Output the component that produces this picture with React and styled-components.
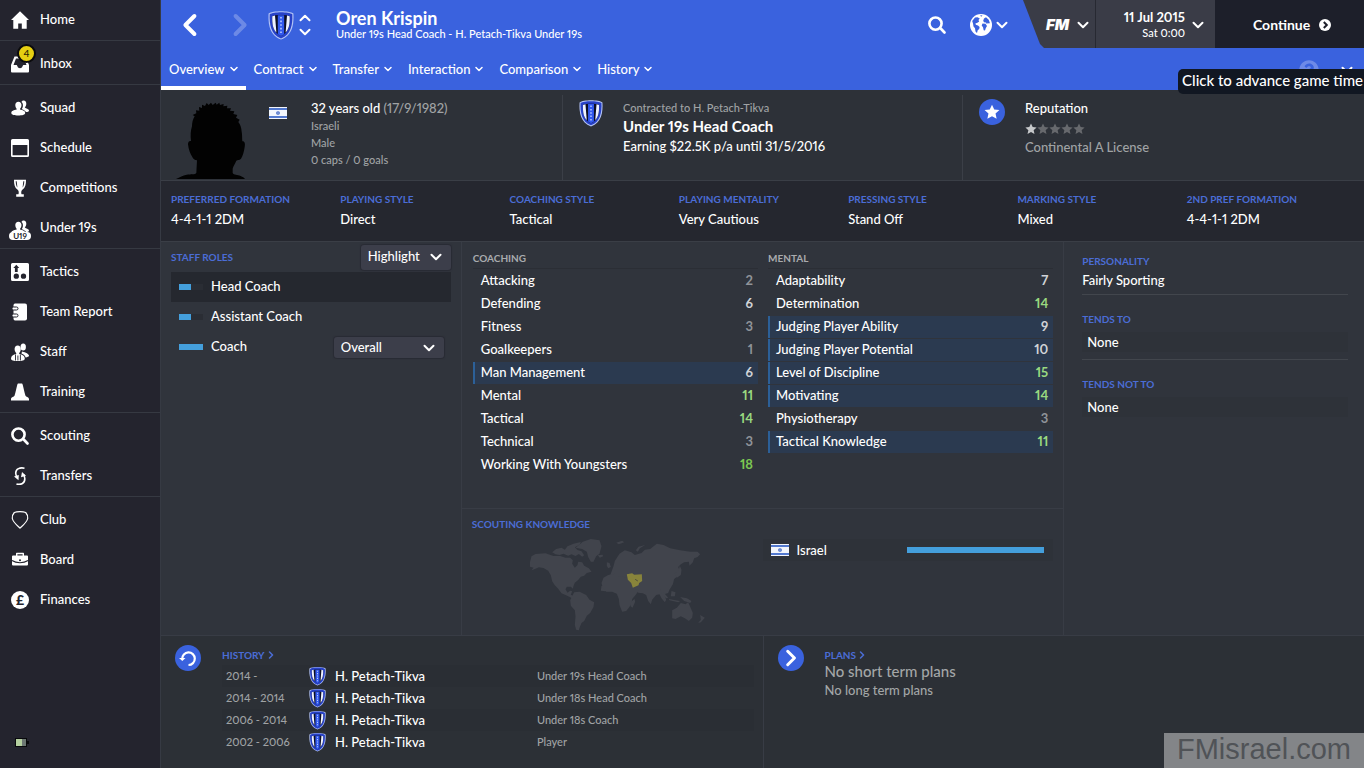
import styled, { createGlobalStyle } from "styled-components";
import { FaQuestionCircle } from "react-icons/fa";

const navGroups = [
    [{ name: "Home", icon: "home" }],
    [{ name: "Inbox", icon: "inbox", badge: 4 }],
    [
        { name: "Squad", icon: "squad" },
        { name: "Schedule", icon: "schedule" },
        { name: "Competitions", icon: "trophy" },
        { name: "Under 19s", icon: "under19" },
    ],
    [
        { name: "Tactics", icon: "tactics" },
        { name: "Team Report", icon: "report" },
        { name: "Staff", icon: "staff" },
        { name: "Training", icon: "training" },
    ],
    [
        { name: "Scouting", icon: "search" },
        { name: "Transfers", icon: "transfers" },
    ],
    [
        { name: "Club", icon: "club" },
        { name: "Board", icon: "board" },
        { name: "Finances", icon: "finances" },
    ],
]

const tabs = ["Overview", "Contract", "Transfer", "Interaction", "Comparison", "History"]

const styles = [
    ["Preferred Formation", "4-4-1-1 2DM"],
    ["Playing Style", "Direct"],
    ["Coaching Style", "Tactical"],
    ["Playing Mentality", "Very Cautious"],
    ["Pressing Style", "Stand Off"],
    ["Marking Style", "Mixed"],
    ["2nd Pref Formation", "4-4-1-1 2DM"],
]

const coaching = [
    { name: "Attacking", value: 2 },
    { name: "Defending", value: 6 },
    { name: "Fitness", value: 3 },
    { name: "Goalkeepers", value: 1 },
    { name: "Man Management", value: 6, key: true },
    { name: "Mental", value: 11 },
    { name: "Tactical", value: 14 },
    { name: "Technical", value: 3 },
    { name: "Working With Youngsters", value: 18 },
]

const mental = [
    { name: "Adaptability", value: 7 },
    { name: "Determination", value: 14 },
    { name: "Judging Player Ability", value: 9, key: true },
    { name: "Judging Player Potential", value: 10, key: true },
    { name: "Level of Discipline", value: 15, key: true },
    { name: "Motivating", value: 14, key: true },
    { name: "Physiotherapy", value: 3 },
    { name: "Tactical Knowledge", value: 11, key: true },
]

const history = [
    ["2014 -", "Under 19s Head Coach"],
    ["2014 - 2014", "Under 18s Head Coach"],
    ["2006 - 2014", "Under 18s Coach"],
    ["2002 - 2006", "Player"],
]

const people = (
    <>
        <path d="M12.5 1.5c2 0 3 1.5 2.800 3.600-.1 1.500-.7 2.800-1.500 3.300 1 1 4.200 1.400 4.200 3.100 0 1-1.500 1.500-3 1.500-1-1.600-2.800-2.300-4.300-2.700.9-1.200 1.300-2.700 1.200-4.300 0-1.200-.6-2.300-1.500-3 .4-.9 1.200-1.500 2.100-1.500z" />
        <path d="M7.400 2.700c1.900 0 3.100 1.300 3.100 3.400 0 1.500-.6 3-1.500 3.800v.7c2.500.7 5.200 1.300 5.200 3.400 0 1.800-3.300 2.500-7 2.500S.3 15.800.3 14c0-2.100 2.700-2.700 5.400-3.400v-.7C4.900 9.100 4.300 7.600 4.300 6.100c0-2.100 1.200-3.400 3.100-3.400z" />
    </>
)

const glyphs = {
    home: <path d="M9 .3 18 9h-2.300v8.700h-4.900v-5.200H7.200v5.200H2.300V9H0z" />,
    inbox: <path fillRule="evenodd" d="M3.500 1.500h11L18 10v6.500q0 1-1 1H1q-1 0-1-1V10zM5 3.500 2.500 10h3.200c.6 0 .6 3.200 3.300 3.200s2.700-3.200 3.300-3.200h3.200L13 3.500z" />,
    squad: people,
    schedule: <path fillRule="evenodd" d="M1.500 0h15Q18 0 18 1.500v15q0 1.500-1.500 1.500h-15Q0 18 0 16.500v-15Q0 0 1.500 0zM1.600 6v10.300h14.800V6z" />,
    trophy: <path fillRule="evenodd" d="M3 .8h12c.1 4.800-.8 8.200-3.400 9.700-1.500.9-1.700 3.700-1 4.700h2.200v2.500H5.200v-2.500h2.200c.7-1 .5-3.800-1-4.700C3.800 9 2.900 5.600 3 .8zm1.700 1.500c.1 2.900.7 5 1.700 6.200L5.700 2.300zm8.600 0h-1l-.7 6.200c1-1.200 1.600-3.300 1.700-6.200z" />,
    tactics: (
        <path fillRule="evenodd" d="M1.500 0h15Q18 0 18 1.500v15q0 1.500-1.500 1.500h-15Q0 18 0 16.500v-15Q0 0 1.500 0zM5.300 1.700 2.300 5h1.600v4h2.800V5h1.600zM5.300 10.500a2.600 2.600 0 1 0 0 5.300 2.600 2.600 0 0 0 0-5.300zm7.200 0a2.600 2.600 0 1 0 0 5.300 2.600 2.600 0 0 0 0-5.300z" />
    ),
    report: (
        <>
            <path d="M4 .5h10q2 0 2 2v13q0 2-2 2H4q-1.500 0-1.500-2V2.500Q2.500.5 4 .5z" />
            <rect x="1" y="4" width="6" height="3" rx="1.500" fill="#fff" stroke="#24242e" />
            <rect x="1" y="11" width="6" height="3" rx="1.500" fill="#fff" stroke="#24242e" />
        </>
    ),
    staff: (
        <>
            <ellipse cx="12.200" cy="4" rx="2.700" ry="3.500" />
            <path d="M11 8.500c1.500.3 6.500 1.800 7 4 .2 1.200-1.500 1.800-3.300 2-.6-2-2-3.300-4.200-4z" />
            <path d="M6.700 2.500c2 0 3.100 1.500 3.100 3.600 0 1.600-.7 3.200-1.600 4v1c3 .4 5.600 2 5.600 4.600 0 1.600-2.800 2.300-6.900 2.300S0 17.300 0 15.700c0-2.600 2.400-4.200 5.200-4.600v-1c-.9-.8-1.600-2.400-1.600-4 0-2.100 1.100-3.600 3.100-3.600z" />
            <path d="M4.500 11.500v6M9.400 11.500v6M6.900 12.500v5" stroke="#24242e" strokeWidth=".9" />
        </>
    ),
    training: <path d="M7.500.5h3c.7 0 1 .5 1.200 1.200 1 3.800 1.600 7.300 2.800 11 .4 1 3.500 1.300 3.500 3.400v1.400H0v-1.400c0-2.100 3.100-2.400 3.500-3.400 1.200-3.700 1.800-7.200 2.800-11 .2-.7.500-1.200 1.200-1.200z" />,
    search: <path fill="none" stroke="currentColor" strokeWidth="2.600" strokeLinecap="round" d="M12.700 12.500l3.800 4M7.500 1.500a6 6 0 1 0 0 12.200 6 6 0 0 0 0-12.200z" />,
    transfers: (
        <>
            <path fill="none" stroke="currentColor" strokeWidth="1.600" d="M13.500 1.200C9 .3 4.800 1.600 4.700 6c0 2 .5 3 1.500 4.500M5.500 17c4.500 1.200 8.500-.7 8.300-5.500-.1-1.700-.5-2.800-1.300-4.200" />
            <path d="M3 9.500 7.800 8l-.3 5.300zM15 8.700l-5 1.500 1-5.200z" />
        </>
    ),
    club: <path fill="none" stroke="currentColor" strokeWidth="1.200" d="M3.300 1.500C6 .4 12 .4 14.700 1.500c1.500 1.700 2.400 4 2 6-.8 3.800-4.500 6.600-7.700 9.600C5.800 14.100 2.100 11.300 1.300 7.500c-.4-2 .5-4.300 2-6z" />,
    board: (
        <>
            <path fillRule="evenodd" d="M5 4.500v-2q0-.7.700-.7h6.600q.7 0 .7.700v2h3q1 0 1 1v8q0 1-1 1H2q-1 0-1-1v-8q0-1 1-1zm1.400 0h5.200V3.200H6.400z" />
            <path d="M1 9.500c4.500 3 11.500 3 16 0" fill="none" stroke="#24242e" strokeWidth="1.100" />
            <circle cx="9" cy="9.300" r="1" fill="#24242e" />
        </>
    ),
}

function Glyph({ name }) {
    if (name === "under19") {
        return (
            <SmallPeople>
                <svg width="18" height="18" viewBox="0 0 18 18" fill="currentColor">{people}</svg>
                <span>U19</span>
            </SmallPeople>
        )
    }
    if (name === "finances") {
        return <Pound>£</Pound>
    }
    return (
        <svg width="18" height="18" viewBox="0 0 18 18" fill="currentColor" aria-hidden="true">
            {glyphs[name]}
        </svg>
    )
}

function Chevron({ width = 8, weight = 2, dir = "down" }) {
    const turn = { down: 0, left: 90, up: 180, right: 270 }[dir]
    return (
        <svg width={width} height={width} viewBox="0 0 12 12" aria-hidden="true">
            <path d="M1.500 3.800 6 8.300l4.500-4.500" fill="none" stroke="currentColor" strokeWidth={weight * 12 / width}
                strokeLinecap="round" strokeLinejoin="round" transform={`rotate(${turn} 6 6)`} />
        </svg>
    )
}

function Crest({ width }) {
    return (
        <svg width={width} height={Math.round(width * 1.15)} viewBox="0 0 26 30" aria-hidden="true">
            <path d="M.6 3.500C4.500.4 21.500.4 25.400 3.500 26 14 24.500 25.500 13 29.600 1.500 25.500 0 14 .6 3.500z" fill="#b4c4f6" />
            <path d="M1.700 4.200C5.500 1.500 20.500 1.500 24.300 4.200 24.700 14 23.300 24.600 13 28.400 2.700 24.600 1.300 14 1.700 4.200z" fill="#2741c8" />
            <path d="M4.300 6.300C7 4.700 19 4.700 21.700 6.300c.3 9-1 16.300-8.700 19.800C5.300 22.600 4 15.300 4.300 6.300z" fill="#0c0e24" />
            <path d="M4.300 6.300 7 5.600l1.400 17C5.200 19.600 4 14 4.300 6.300zM21.700 6.300 19 5.600l-1.400 17c3.200-3 4.400-8.600 4.100-16.300z" fill="#eef2ff" />
            <path d="M9.800 5.300h6.400v19L13 26l-3.200-1.700z" fill="#3158ee" />
            <path d="M13 7v17" stroke="#b9caff" strokeWidth="1.600" strokeDasharray="1.600 2" />
        </svg>
    )
}

function Flag() {
    return (
        <svg width="18" height="12" viewBox="0 0 18 12" aria-hidden="true">
            <rect width="18" height="12" fill="#f3f6fc" />
            <path d="M0 2h18M0 10h18" stroke="#5379cf" strokeWidth="1.800" />
            <path d="M9 4.300 10.600 7H7.400zM9 7.800 7.400 5.100h3.200z" fill="none" stroke="#4468c4" strokeWidth=".7" />
        </svg>
    )
}

function StarShape({ size, color }) {
    return (
        <svg width={size} height={size} viewBox="0 0 20 20" aria-hidden="true">
            <path fill={color} d="M10 .8l2.800 6 6.500.7-4.900 4.400 1.400 6.600L10 15.200l-5.800 3.300 1.400-6.600L.7 7.500l6.500-.7z" />
        </svg>
    )
}

function Silhouette() {
    return (
        <svg width="72" height="78" viewBox="0 0 216 234" aria-hidden="true">
            <path fill="#020202" d="M0 234C12 228 20 223 32 221C44 219 58 222 61 216L63 178C56 177 51 174 49 168C42 158 38 146 36 130C36 122 40 119 45 120C43 104 44 88 48 76C48 64 51 54 56 46L50 42L61 37L60 28L70 29L69 18L78 21L78 11L87 15L92 6L98 12L105 5L110 12L119 5L122 11L130 5L132 12L143 9L142 16L154 14L153 22L165 22L162 29L175 31L172 39L184 42L180 50L191 56L187 63C193 70 196 80 197 92C199 102 198 112 199 121C206 120 208 128 206 138C204 152 200 166 195 173C190 178 184 176 181 179C177 188 172 195 170 203L170 216C174 223 184 221 194 225C200 228 204 230 207 234Z" />
        </svg>
    )
}

function WorldMap() {
    return (
        <MapSvg viewBox="210 110 530 285" role="img" aria-label="World map">
            <g fill="#41444c">
                <path d="M214 168l12-7 30-2 24 8 20 0 16 5 14 0 8 8-2 10 8 12 8-8 2-10 12 2 6 10 14 8 8 10-14 4-8 8-10 3-8 10-10 8-4 10-2 8-6-6-12 0-4 8 6 10 8-6 6 2-4 10 8 4 10 10-6 2-14-8-12-6-14-6-10-14-10-10-8-12-4-18-8-14-14-8-14-2-10 4-12 5 6-8-14-4z" />
                <path d="M276 156l12-10 16-4 10 6 8-10 18-8 22-5-4 8-14 8 8 8 12 4 8 12-6 4-10-8-10 6-12-5-10 4-14-6-12 4-12-2z" />
                <path d="M346 142l22-18 24-8 26 4 6 18-6 22-10 8-8 16-8 0-8-14-4-16-14-8z" />
                <path d="M342 276l16-2 20 10 10 14 14 8-2 14-10 18-10 8-8 16-8 6-6 14-2 8-8-2-4-14 2-26-2-18-12-14-2-16z" />
                <path d="M413 165l14-2 2 5-10 4zM440 186l8 2 4 12-8 4-4-8zM468 127l18-6 6 5-16 6zM527 150l8-11 20-5-16 10-6 10z" />
                <path d="M460 198l4-16 14-22 16-10 20 6 10 8 20-6 10-10 16-2 20-16 20 4 20 10 30 6 30 4 22 0 8 8-8 8-10 4-4 12-10 10-2-12-14 2-10 6-8 8 6 14-6 12-12 10-4 16-10 16-4 10-12 4 6 16-4 8-10-12-6-12-10 2-12 14-4 14-8-10-6-18-10-5-14-2-6-4-14-3-12-1-6-6-12 2-8 4-8-6-6-8-8 0-8 10-10 8-14-2 2-14 12-4-2-10 10-2z" />
                <path d="M444 224l20-4 10 8 18 2 14 2 8 22 10 12 12 2-8 14-12 14-2 14-8 12-8 10-12 2-8-20-2-18-6-16-14-6-18 0-10-12-4-14 6-16z" />
                <path d="M513 304l10-8 2 8-8 18-6-4zM643 220l12-8 4-16 5 12-2 16-12 8zM600 266l12 12 12 14-6 2-14-14zM626 296l20 4 14 2-6 4-26-6zM634 272l12 4-2 12-12 0zM660 290l20 4 14 8-4 6-18-6z" />
                <path d="M636 330l14-8 12-14 14 4 8-6 8 18 6 14-2 14-10 10-12-8-12-6-16 8-10-2zM720 344l14 8-12 14-8 2 8-10z" />
            </g>
            <path d="M500 222l16-3 6 4 23-1 1 20-9 6-2 7-17 7-5-14-10-10z" fill="#88843b" />
            <path d="M525 237l8 5" stroke="#30343c" strokeWidth="2" fill="none" />
        </MapSvg>
    )
}

function AttributeTable({ title, rows }) {
    return (
        <div>
            <TableTitle>{title}</TableTitle>
            <Attributes aria-label={title}>
                <tbody>
                    {rows.map(row => (
                        <AttributeRow key={row.name} $key={row.key} $value={row.value}>
                            <th scope="row">{row.name}</th>
                            <td>{row.value}</td>
                        </AttributeRow>
                    ))}
                </tbody>
            </Attributes>
        </div>
    )
}

function Picker({ label, value, small }) {
    return (
        <PickerBox $small={small}>
            <select aria-label={label} defaultValue={value}>
                <option>{value}</option>
            </select>
            <Chevron width={12} />
        </PickerBox>
    )
}

export default function App() {
    return (
        <>
            <GlobalStyle />
            <Page>
                <Sidebar>
                    {navGroups.map(group => (
                        <NavGroup key={group[0].name}>
                            {group.map(item => (
                                <NavLink key={item.name} href="#">
                                    <NavIcon>
                                        <Glyph name={item.icon} />
                                        {item.badge && <Badge>{item.badge}</Badge>}
                                    </NavIcon>
                                    <RowText>{item.name}</RowText>
                                </NavLink>
                            ))}
                        </NavGroup>
                    ))}
                    <Battery width="14" height="10" viewBox="0 0 14 10" aria-hidden="true">
                        <path d="M0 0h12v3h2v3h-2v3H0z" fill="#08090b" />
                        <rect x="1" y="1" width="6" height="7" fill="#b4cf9f" />
                        <rect x="7" y="1" width="4" height="7" fill="#6d7873" />
                    </Battery>
                </Sidebar>

                <Main>
                    <Header>
                        <TopRow>
                            <Arrows>
                                <IconButton aria-label="Back"><Chevron width={24} weight={4} dir="left" /></IconButton>
                                <IconButton aria-label="Forward" $faded><Chevron width={24} weight={4} dir="right" /></IconButton>
                            </Arrows>
                            <Crest width={26} />
                            <Stepper>
                                <IconButton aria-label="Previous person"><Chevron width={12} dir="up" /></IconButton>
                                <IconButton aria-label="Next person"><Chevron width={12} /></IconButton>
                            </Stepper>
                            <PersonTitle>
                                <h1>Oren Krispin</h1>
                                <p>Under 19s Head Coach - H. Petach-Tikva Under 19s</p>
                            </PersonTitle>
                            <Tools>
                                <IconButton aria-label="Search"><Glyph name="search" /></IconButton>
                                <IconButton aria-label="World">
                                    <svg width="22" height="22" viewBox="0 0 22 22">
                                        <circle cx="11" cy="11" r="11" fill="#fff" />
                                        <path fill="#3a62de" d="M2.200 7 5 3.500l2.500-.3L9.800 4.500 8.500 6l.7 1.500L7 9l-1.500.3.300 1.500 2.200.7 1.600 1.500-.4 2-1.500 1.300L7 19l-1.500-1.500L5 14.300 3.500 12.500 3 9.500zM10 1.500l2.500-.2-1.200 1.500zM14 4.500l2-1.200 2.700 2.500 1.100 3-.8 1-1.200-1-.8 1.500-1-1.800L14 8.300l-.8-1.500zM12.500 9.500l3 .3 1.500 2.200-1.200 2-.8 2.500-1.300-.3-.7-3-1.300-1.700z" />
                                    </svg>
                                    <Chevron width={12} />
                                </IconButton>
                            </Tools>
                            <GameBar>
                                <GameMenu><FmLogo>FM</FmLogo><Chevron width={12} /></GameMenu>
                                <DateMenu>
                                    <span><b>11 Jul 2015</b>Sat 0:00</span>
                                    <Chevron width={12} />
                                </DateMenu>
                                <ContinueButton>
                                    Continue
                                    <svg width="12" height="12" viewBox="0 0 12 12">
                                        <circle cx="6" cy="6" r="6" fill="#fff" />
                                        <path d="M4.800 3 7.800 6l-3 3" fill="none" stroke="#1d1f2a" strokeWidth="2" />
                                    </svg>
                                </ContinueButton>
                            </GameBar>
                        </TopRow>
                        <TabRow>
                            {tabs.map((tab, i) => (
                                <Tab key={tab} href="#" $active={i === 0}>{tab}<Chevron width={8} weight={1.5} /></Tab>
                            ))}
                            <HelpTools>
                                <HelpButton aria-label="Help"><FaQuestionCircle size={20} /></HelpButton>
                                <IconButton aria-label="More"><Chevron width={12} /></IconButton>
                            </HelpTools>
                            <Tooltip role="tooltip">Click to advance game time</Tooltip>
                        </TabRow>
                    </Header>

                    <Profile>
                        <Person>
                            <Silhouette />
                            <Flag />
                            <Details>
                                <h2>32 years old <span>(17/9/1982)</span></h2>
                                <p>Israeli</p>
                                <p>Male</p>
                                <p>0 caps / 0 goals</p>
                            </Details>
                        </Person>
                        <Contract>
                            <Crest width={24} />
                            <div>
                                <p>Contracted to H. Petach-Tikva</p>
                                <h2>Under 19s Head Coach</h2>
                                <strong>Earning $22.5K p/a until 31/5/2016</strong>
                            </div>
                        </Contract>
                        <Reputation>
                            <Disc><StarShape size={16} color="#fff" /></Disc>
                            <div>
                                <h2>Reputation</h2>
                                <Stars aria-label="1 of 5 stars">
                                    {[1, 2, 3, 4, 5].map(n => (
                                        <StarShape key={n} size={12} color={n === 1 ? "#c6c8ca" : "#67696d"} />
                                    ))}
                                </Stars>
                                <p>Continental A License</p>
                            </div>
                        </Reputation>
                    </Profile>

                    <StyleStrip>
                        {styles.map(([name, value]) => (
                            <div key={name}>
                                <Label>{name}</Label>
                                <p>{value}</p>
                            </div>
                        ))}
                    </StyleStrip>

                    <Columns>
                        <Roles>
                            <RolesHead>
                                <Label>Staff Roles</Label>
                                <Picker label="Highlight" value="Highlight" />
                            </RolesHead>
                            <Role $active>
                                <RoleBar><i style={{ width: "50%" }} /></RoleBar>
                                <RowText>Head Coach</RowText>
                            </Role>
                            <Role>
                                <RoleBar><i style={{ width: "50%" }} /></RoleBar>
                                <RowText>Assistant Coach</RowText>
                            </Role>
                            <Role>
                                <RoleBar><i style={{ width: "100%" }} /></RoleBar>
                                <RowText>Coach</RowText>
                                <Picker label="Coach type" value="Overall" small />
                            </Role>
                        </Roles>

                        <Centre>
                            <AttributeArea>
                                <AttributeTable title="Coaching" rows={coaching} />
                                <AttributeTable title="Mental" rows={mental} />
                            </AttributeArea>
                            <Scouting>
                                <div>
                                    <Label>Scouting Knowledge</Label>
                                    <WorldMap />
                                </div>
                                <Country>
                                    <Flag />
                                    <span>Israel</span>
                                    <i />
                                </Country>
                            </Scouting>
                        </Centre>

                        <Traits>
                            <Trait>
                                <Label>Personality</Label>
                                <p>Fairly Sporting</p>
                            </Trait>
                            <Trait $boxed>
                                <Label>Tends To</Label>
                                <p>None</p>
                            </Trait>
                            <Trait $boxed>
                                <Label>Tends Not To</Label>
                                <p>None</p>
                            </Trait>
                        </Traits>
                    </Columns>

                    <Bottom>
                        <BottomPanel>
                            <Disc>
                                <svg width="18" height="18" viewBox="0 0 18 18">
                                    <path d="M3.200 10A6.300 6.300 0 1 1 9.500 16" fill="none" stroke="#fff" strokeWidth="2.200" />
                                    <path d="M0 9h6.500L3.300 12z" fill="#fff" />
                                </svg>
                            </Disc>
                            <div>
                                <LabelLink href="#">History <Chevron width={8} weight={1.5} dir="right" /></LabelLink>
                                <HistoryTable>
                                    <tbody>
                                        {history.map(([years, role]) => (
                                            <tr key={years}>
                                                <td>{years}</td>
                                                <td><Crest width={17} /></td>
                                                <th scope="row">H. Petach-Tikva</th>
                                                <td>{role}</td>
                                            </tr>
                                        ))}
                                    </tbody>
                                </HistoryTable>
                            </div>
                        </BottomPanel>
                        <BottomPanel>
                            <Disc><Chevron width={18} weight={3} dir="right" /></Disc>
                            <Plans>
                                <LabelLink href="#">Plans <Chevron width={8} weight={1.5} dir="right" /></LabelLink>
                                <h2>No short term plans</h2>
                                <p>No long term plans</p>
                            </Plans>
                        </BottomPanel>
                    </Bottom>
                </Main>
                <Watermark>FMisrael.com</Watermark>
            </Page>
        </>
    )
};


const GlobalStyle = createGlobalStyle`
    *{
        box-sizing: border-box;
        margin: 0;
        padding: 0;
    }

    body{
        background: #30343c;
        font-family: Lato, "Liberation Sans", sans-serif;
        font-size: 13px;
        font-weight: 500;
        font-variant-numeric: proportional-nums;
        line-height: 20px;
        color: #ffffff;
    }

    svg{
        display: block;
        flex: none;
    }

    a{
        color: inherit;
        text-decoration: none;
    }

    button, select{
        font: inherit;
        color: inherit;
        background: none;
        border: none;
        cursor: pointer;
    }
`

const Page = styled.div`
    position: relative;
    display: flex;
    min-height: 100vh;
`

const Sidebar = styled.nav`
    width: 161px;
    flex: none;
    display: flex;
    flex-direction: column;
    background: #24242e;
    border-right: 1px solid #363a43;
`

const NavGroup = styled.div`
    & + &{
        padding-top: 3px;
        border-top: 1px solid #363942;
    }
`

const NavLink = styled.a`
    height: 40px;
    padding-left: 11px;
    display: flex;
    align-items: center;
    gap: 11px;
`

const RowText = styled.span`
    padding-bottom: 2px;
`

const NavIcon = styled.span`
    position: relative;
    display: flex;
    justify-content: center;
    width: 18px;
`

const Badge = styled.span`
    position: absolute;
    left: 6px;
    top: -11px;
    width: 19px;
    height: 19px;
    border: 2px solid #0b0b0d;
    border-radius: 50%;
    background: #e6cf12;
    color: #2a2606;
    font-size: 10px;
    line-height: 15px;
    text-align: center;
`

const SmallPeople = styled.span`
    position: relative;

    span{
        position: absolute;
        left: -2px;
        top: 13px;
        width: 22px;
        height: 8px;
        border-radius: 4px;
        background: #ffffff;
        color: #24242e;
        font-size: 8px;
        font-weight: 700;
        line-height: 8px;
        text-align: center;
    }
`

const Pound = styled.span`
    width: 18px;
    height: 18px;
    border-radius: 50%;
    background: #ffffff;
    color: #24242e;
    font-size: 14px;
    font-weight: 900;
    line-height: 18px;
    text-align: center;
`

const Battery = styled.svg`
    margin: auto 0 20px 15px;
`

const Main = styled.main`
    flex: 1;
    min-width: 0;
    display: flex;
    flex-direction: column;
`

const Header = styled.header`
    height: 90px;
    background: #3a62de;
`

const TopRow = styled.div`
    display: flex;
    align-items: center;
    height: 50px;
    padding-left: 17px;
`

const IconButton = styled.button`
    display: flex;
    align-items: center;
    gap: 4px;
    opacity: ${props => props.$faded ? 0.25 : 1};
`

const Arrows = styled.div`
    display: flex;
    gap: 26px;
    margin-right: 16px;
`

const Stepper = styled.div`
    display: flex;
    flex-direction: column;
    gap: 2px;
    margin: 0 25px 0 5px;
`

const PersonTitle = styled.div`
    flex: 1;
    padding-bottom: 2px;

    h1{
        font-size: 18px;
        font-weight: 700;
        line-height: 20px;
    }

    p{
        font-size: 11px;
        line-height: 12px;
    }
`

const Tools = styled.div`
    display: flex;
    gap: 24px;
    margin-right: 15px;
`

const GameBar = styled.div`
    align-self: flex-start;
    display: flex;
    height: 48px;
    background: #3a3c47;
    clip-path: polygon(0 0, 100% 0, 100% 100%, 21px 100%, 17px 44px);

    button{
        display: flex;
        align-items: center;
        padding-top: 2px;
    }
`

const GameMenu = styled.button`
    width: 73px;
    padding-left: 23px;
    gap: 8px;
    border-right: 1px solid #272932;
`

const FmLogo = styled.span`
    font-family: Inter, sans-serif;
    font-size: 15px;
    font-style: italic;
    font-weight: 900;
`

const DateMenu = styled.button`
    width: 119px;
    justify-content: flex-end;
    gap: 7px;
    padding-right: 11px;

    span{
        font-size: 11px;
        line-height: 16px;
        text-align: right;
    }

    b{
        display: block;
        font-size: 13px;
        font-weight: 700;
    }
`

const ContinueButton = styled.button`
    width: 149px;
    padding-left: 38px;
    gap: 9px;
    background: #1d1f2a;
    font-size: 14px;
    font-weight: 700;
`

const TabRow = styled.nav`
    position: relative;
    display: flex;
    height: 40px;
`

const Tab = styled.a`
    display: flex;
    align-items: center;
    gap: 5px;
    padding: 0 8px 2px;
    border-top: 4px solid transparent;
    border-bottom: 4px solid ${props => props.$active ? "#ffffff" : "transparent"};
`

const HelpTools = styled.div`
    display: flex;
    align-items: center;
    gap: 22px;
    margin-left: auto;
    padding-right: 11px;
`

const HelpButton = styled.button`
    color: #6d8ae8;
`

const Tooltip = styled.div`
    position: absolute;
    right: 0;
    top: 19px;
    height: 25px;
    padding: 0 1px 0 4px;
    border-radius: 5px 0 0 5px;
    background: #111722;
    font-size: 15px;
    line-height: 23px;
    white-space: nowrap;
`

const Profile = styled.section`
    display: grid;
    grid-template-columns: 1fr 1fr 1fr;
    height: 91px;
    padding-top: 5px;
    background: #2d3138;
    border-bottom: 1px solid #3a3e46;

    h2{
        font-size: 13px;
        font-weight: 500;
        line-height: 18px;
    }

    p{
        color: #a0a3a5;
    }
`

const Person = styled.div`
    display: flex;
    align-items: flex-start;
    padding: 6px 0 0 15px;
    gap: 21px;

    svg + svg{
        margin-top: 6px;
    }
`

const Details = styled.div`
    margin-top: -2px;
    padding-left: 3px;

    h2 span{
        color: #a0a3a5;
    }

    p{
        font-size: 11px;
        line-height: 17px;
    }
`

const Contract = styled.div`
    display: flex;
    padding: 4px 0 0 16px;
    gap: 20px;
    border-left: 1px solid #3b3f47;
    border-right: 1px solid #3b3f47;

    p{
        font-size: 11px;
        line-height: 18px;
    }

    h2{
        font-size: 15px;
        font-weight: 700;
        line-height: 19px;
    }

    strong{
        font-weight: 500;
    }
`

const Disc = styled.span`
    flex: none;
    display: flex;
    align-items: center;
    justify-content: center;
    width: 26px;
    height: 26px;
    border-radius: 50%;
    background: #3a62de;
`

const Reputation = styled.div`
    display: flex;
    padding: 4px 0 0 16px;
    gap: 20px;
`

const Stars = styled.div`
    display: flex;
    margin: 6px 0 2px;
`

const Label = styled.h3`
    color: #4b6dd6;
    font-size: 10px;
    font-weight: 700;
    line-height: 14px;
    text-transform: uppercase;
    white-space: nowrap;
`

const StyleStrip = styled.section`
    display: grid;
    grid-template-columns: repeat(7, 1fr);
    height: 60px;
    padding: 11px 8px 0 10px;
    background: #25272f;

    p{
        margin-top: 3px;
    }
`

const Columns = styled.div`
    flex: 1;
    display: grid;
    grid-template-columns: 1fr 2fr 1fr;
    border-top: 1px solid #3a3e46;
`

const Roles = styled.section`
    padding: 0 10px;
    border-right: 1px solid #383c45;
`

const RolesHead = styled.div`
    height: 30px;
    display: flex;
    align-items: center;
    justify-content: space-between;
`

const PickerBox = styled.span`
    display: grid;
    align-items: center;
    width: ${props => props.$small ? 110 : 90}px;
    height: ${props => props.$small ? 21 : 25}px;
    margin-left: auto;
    border-radius: 3px;
    background: #3c3e4a;
    box-shadow: 0 0 1px 1px #292b34;

    select{
        grid-area: 1 / 1;
        width: 100%;
        padding: 0 0 2px 7px;
        appearance: none;
    }

    svg{
        grid-area: 1 / 1;
        justify-self: end;
        margin-right: 9px;
        pointer-events: none;
    }
`

const Role = styled.div`
    height: 30px;
    display: flex;
    align-items: center;
    padding: 0 7px 0 8px;
    background: ${props => props.$active ? "#25282f" : "none"};
`

const RoleBar = styled.span`
    width: 24px;
    height: 6px;
    margin-right: 8px;
    background: #2a2d34;

    i{
        display: block;
        height: 100%;
        background: #449fdc;
    }
`

const Centre = styled.div`
    display: flex;
    flex-direction: column;
`

const AttributeArea = styled.section`
    display: grid;
    grid-template-columns: 1fr 1fr;
    gap: 10px;
    padding: 9px 10px 31px 11px;
    border-bottom: 1px solid #383c45;
`

const TableTitle = styled.h3`
    padding-bottom: 3px;
    border-bottom: 1px solid #2b2e35;
    color: #a9abae;
    font-size: 10px;
    font-weight: 700;
    line-height: 14px;
    text-transform: uppercase;
`

const Attributes = styled.table`
    width: 100%;
    border-spacing: 0 1px;
`

function valueColor(value) {
    if (value > 15) return "#7cc752"
    if (value > 10) return "#9ad980"
    if (value > 5) return "#d0d3d7"
    return "#8f9399"
}

const AttributeRow = styled.tr`
    background: ${props => props.$key ? "#2b3a50" : "none"};

    th, td{
        height: 22px;
        padding-bottom: 2px;
    }

    th{
        padding-left: 6px;
        border-left: 2px solid ${props => props.$key ? "#2c6098" : "transparent"};
        font-weight: 500;
        text-align: left;
    }

    td{
        padding-right: 5px;
        color: ${props => valueColor(props.$value)};
        font-weight: 700;
        text-align: right;
    }
`

const Scouting = styled.section`
    flex: 1;
    display: grid;
    grid-template-columns: 1fr 1fr;
    padding: 8px 10px 2px;
`

const MapSvg = styled.svg`
    width: 177px;
    height: 95px;
    margin: 6px 0 0 58px;
`

const Country = styled.div`
    align-self: start;
    display: flex;
    align-items: center;
    height: 22px;
    margin-top: 22px;
    padding: 0 9px 0 8px;
    gap: 8px;
    background: #2e3239;

    i{
        width: 50%;
        height: 6px;
        margin-left: auto;
        background: #449fdc;
    }
`

const Traits = styled.section`
    padding: 12px 16px 0 18px;
    border-left: 1px solid #383c45;
`

const Trait = styled.div`
    padding-bottom: ${props => props.$boxed ? 7 : 4}px;

    & + &{
        padding-top: 17px;
        border-top: 1px solid #42464d;
    }

    p{
        margin-top: ${props => props.$boxed ? 6 : 2}px;
        padding-left: ${props => props.$boxed ? 5 : 0}px;
        background: ${props => props.$boxed ? "#2e3239" : "none"};
    }
`

const Bottom = styled.div`
    display: grid;
    grid-template-columns: 1fr 1fr;
    background: #2c3036;
    border-top: 1px solid #383c45;
`

const BottomPanel = styled.section`
    display: flex;
    align-items: flex-start;
    padding: 9px 9px 15px 14px;
    gap: 21px;

    & + &{
        border-left: 1px solid #383c45;
    }

    > div{
        flex: 1;
        padding-top: 3px;
    }
`

const LabelLink = styled.a`
    display: flex;
    align-items: center;
    gap: 2px;
    color: #4b6dd6;
    font-size: 10px;
    font-weight: 700;
    line-height: 14px;
    text-transform: uppercase;
`

const HistoryTable = styled.table`
    width: 100%;
    margin-top: 3px;
    border-collapse: collapse;
    table-layout: fixed;

    tr:nth-child(odd){
        background: #2a2e34;
    }

    td, th{
        height: 22px;
        text-align: left;
    }

    th{
        width: 38%;
        font-weight: 500;
    }

    td{
        color: #a0a3a5;
        font-size: 11px;
    }

    td:first-child{
        width: 87px;
        padding-left: 4px;
    }

    td:nth-child(2){
        width: 26px;
    }
`

const Plans = styled.div`
    color: #a3a6a7;

    h2{
        font-size: 15px;
        font-weight: 500;
        line-height: 18px;
    }
`

const Watermark = styled.div`
    position: absolute;
    right: 0;
    bottom: 0;
    width: 200px;
    height: 35px;
    background: #838588;
    color: #505357;
    font-family: "Liberation Sans", sans-serif;
    font-size: 29px;
    line-height: 32px;
    text-align: center;
`
